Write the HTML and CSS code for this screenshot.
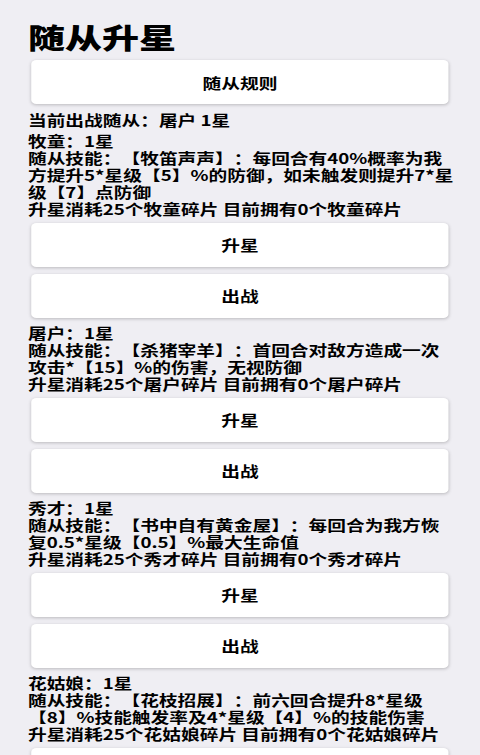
FILE: index.html
```
<!DOCTYPE html>
<html lang="zh">
<head>
    <meta charset="UTF-8">
    <title>随从升星</title>
    <link rel="stylesheet" href="styles.css">
</head>
<body>
<div class="page">
    <h1 class="title">随从升星</h1>
    <button class="btn">随从规则</button>
    <p class="current">当前出战随从：屠户 1星</p>

    <div class="pet">
        <p>牧童：1星</p>
        <p>随从技能：【牧笛声声】：每回合有40%概率为我方提升5*星级【5】%的防御，如未触发则提升7*星级【7】点防御</p>
        <p>升星消耗25个牧童碎片 目前拥有0个牧童碎片</p>
        <button class="btn">升星</button>
        <button class="btn">出战</button>
    </div>

    <div class="pet">
        <p>屠户：1星</p>
        <p>随从技能：【杀猪宰羊】：首回合对敌方造成一次攻击*【15】%的伤害，无视防御</p>
        <p>升星消耗25个屠户碎片 目前拥有0个屠户碎片</p>
        <button class="btn">升星</button>
        <button class="btn">出战</button>
    </div>

    <div class="pet">
        <p>秀才：1星</p>
        <p>随从技能：【书中自有黄金屋】：每回合为我方恢复0.5*星级【0.5】%最大生命值</p>
        <p>升星消耗25个秀才碎片 目前拥有0个秀才碎片</p>
        <button class="btn">升星</button>
        <button class="btn">出战</button>
    </div>

    <div class="pet">
        <p>花姑娘：1星</p>
        <p>随从技能：【花枝招展】：前六回合提升8*星级【8】%技能触发率及4*星级【4】%的技能伤害</p>
        <p>升星消耗25个花姑娘碎片 目前拥有0个花姑娘碎片</p>
        <button class="btn">升星</button>
        <button class="btn">出战</button>
    </div>
</div>
</body>
</html>
```

FILE: styles.css
```
* {
    margin: 0;
    padding: 0;
}

html, body {
    overflow-x: hidden;
}

body {
    background-color: #efeef3;
    color: #000;
    font-family: "Noto Sans CJK SC", sans-serif;
    font-weight: bold;
}

/* 整页在横向上拉宽，文字比例和手机上一致 */
.page {
    width: 369.2px;
    padding: 17px 17.2px 0 21.5px;
    box-sizing: border-box;
    transform: scaleX(1.3);
    transform-origin: 0 0;
}

.title {
    font-size: 28.5px;
    line-height: 40px;
    font-weight: 900;
}

p {
    font-size: 14.4px;
    line-height: 17px;
    text-spacing-trim: space-all;
}

.current {
    margin-bottom: 4.5px;
}

.btn {
    display: block;
    width: calc(100% - 8.9px);
    height: 44px;
    margin: 5.5px 6.6px 6.5px 2.3px;
    border: none;
    border-radius: 4px;
    background-color: #fff;
    box-shadow: 0 1px 3px rgba(0, 0, 0, .22);
    font-family: "Noto Sans CJK SC", sans-serif;
    font-size: 14.4px;
    font-weight: bold;
    color: #000;
    cursor: pointer;
}

.page > .btn {
    margin-top: 3px;
}

.btn + .btn {
    margin-top: 7px;
}
```
